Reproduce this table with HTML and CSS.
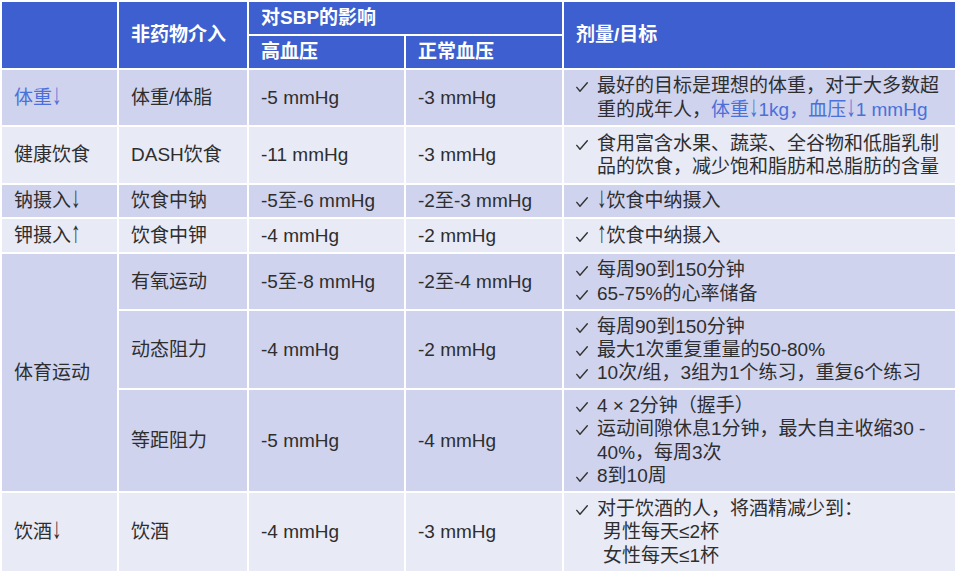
FILE: index.html
```html
<!DOCTYPE html>
<html lang="zh-CN">
<head>
<meta charset="utf-8">
<title>非药物介入</title>
<link rel="stylesheet" href="styles.css">
</head>
<body>
<table class="tbl">
  <colgroup>
    <col class="c1"><col class="c2"><col class="c3"><col class="c4"><col class="c5">
  </colgroup>
  <thead>
    <tr class="h32">
      <th rowspan="2"></th>
      <th rowspan="2">非药物介入</th>
      <th colspan="2">对SBP的影响</th>
      <th rowspan="2">剂量/目标</th>
    </tr>
    <tr class="h32">
      <th>高血压</th>
      <th>正常血压</th>
    </tr>
  </thead>
  <tbody>
    <tr class="dark h55">
      <td class="blue">体重<span class="arr">↓</span></td>
      <td>体重/体脂</td>
      <td>-5 mmHg</td>
      <td>-3 mmHg</td>
      <td><div class="item"><span class="ck"><svg viewBox="0 0 12 10" width="12" height="10"><path d="M0.8 5.4 L4 9.2 L11.3 0.8"/></svg></span><span>最好的目标是理想的体重，对于大多数超<br>重的成年人，<span class="blue">体重<span class="arr">↓</span>1kg，血压<span class="arr">↓</span>1 mmHg</span></span></div></td>
    </tr>
    <tr class="light h56">
      <td>健康饮食</td>
      <td>DASH饮食</td>
      <td>-11 mmHg</td>
      <td>-3 mmHg</td>
      <td><div class="item"><span class="ck"><svg viewBox="0 0 12 10" width="12" height="10"><path d="M0.8 5.4 L4 9.2 L11.3 0.8"/></svg></span><span>食用富含水果、蔬菜、全谷物和低脂乳制<br>品的饮食，减少饱和脂肪和总脂肪的含量</span></div></td>
    </tr>
    <tr class="dark h32">
      <td>钠摄入<span class="arr">↓</span></td>
      <td>饮食中钠</td>
      <td>-5至-6 mmHg</td>
      <td>-2至-3 mmHg</td>
      <td><div class="item"><span class="ck"><svg viewBox="0 0 12 10" width="12" height="10"><path d="M0.8 5.4 L4 9.2 L11.3 0.8"/></svg></span><span><span class="arr">↓</span>饮食中纳摄入</span></div></td>
    </tr>
    <tr class="light h33">
      <td>钾摄入<span class="arr">↑</span></td>
      <td>饮食中钾</td>
      <td>-4 mmHg</td>
      <td>-2 mmHg</td>
      <td><div class="item"><span class="ck"><svg viewBox="0 0 12 10" width="12" height="10"><path d="M0.8 5.4 L4 9.2 L11.3 0.8"/></svg></span><span><span class="arr">↑</span>饮食中纳摄入</span></div></td>
    </tr>
    <tr class="dark h55">
      <td rowspan="3">体育运动</td>
      <td>有氧运动</td>
      <td>-5至-8 mmHg</td>
      <td>-2至-4 mmHg</td>
      <td>
        <div class="item"><span class="ck"><svg viewBox="0 0 12 10" width="12" height="10"><path d="M0.8 5.4 L4 9.2 L11.3 0.8"/></svg></span><span>每周90到150分钟</span></div>
        <div class="item"><span class="ck"><svg viewBox="0 0 12 10" width="12" height="10"><path d="M0.8 5.4 L4 9.2 L11.3 0.8"/></svg></span><span>65-75%的心率储备</span></div>
      </td>
    </tr>
    <tr class="dark h77">
      <td>动态阻力</td>
      <td>-4 mmHg</td>
      <td>-2 mmHg</td>
      <td>
        <div class="item"><span class="ck"><svg viewBox="0 0 12 10" width="12" height="10"><path d="M0.8 5.4 L4 9.2 L11.3 0.8"/></svg></span><span>每周90到150分钟</span></div>
        <div class="item"><span class="ck"><svg viewBox="0 0 12 10" width="12" height="10"><path d="M0.8 5.4 L4 9.2 L11.3 0.8"/></svg></span><span>最大1次重复重量的50-80%</span></div>
        <div class="item"><span class="ck"><svg viewBox="0 0 12 10" width="12" height="10"><path d="M0.8 5.4 L4 9.2 L11.3 0.8"/></svg></span><span>10次/组，3组为1个练习，重复6个练习</span></div>
      </td>
    </tr>
    <tr class="dark h101">
      <td>等距阻力</td>
      <td>-5 mmHg</td>
      <td>-4 mmHg</td>
      <td>
        <div class="item"><span class="ck"><svg viewBox="0 0 12 10" width="12" height="10"><path d="M0.8 5.4 L4 9.2 L11.3 0.8"/></svg></span><span>4 × 2分钟（握手）</span></div>
        <div class="item"><span class="ck"><svg viewBox="0 0 12 10" width="12" height="10"><path d="M0.8 5.4 L4 9.2 L11.3 0.8"/></svg></span><span>运动间隙休息1分钟，最大自主收缩30 -<br>40%，每周3次</span></div>
        <div class="item"><span class="ck"><svg viewBox="0 0 12 10" width="12" height="10"><path d="M0.8 5.4 L4 9.2 L11.3 0.8"/></svg></span><span>8到10周</span></div>
      </td>
    </tr>
    <tr class="light h78">
      <td>饮酒<span class="arr">↓</span></td>
      <td>饮酒</td>
      <td>-4 mmHg</td>
      <td>-3 mmHg</td>
      <td>
        <div class="item"><span class="ck"><svg viewBox="0 0 12 10" width="12" height="10"><path d="M0.8 5.4 L4 9.2 L11.3 0.8"/></svg></span><span>对于饮酒的人，将酒精减少到：</span></div>
        <div class="sub">男性每天≤2杯</div>
        <div class="sub">女性每天≤1杯</div>
      </td>
    </tr>
  </tbody>
</table>
</body>
</html>
```

FILE: styles.css
```css
html, body {
  margin: 0;
  padding: 0;
  background: #ffffff;
}

.tbl {
  width: 957px;
  border-collapse: separate;
  border-spacing: 2px;
  background: #ffffff;
  table-layout: fixed;
  font-family: "Liberation Sans", "Noto Sans CJK SC", sans-serif;
  font-size: 19px;
  line-height: 23.3px;
  color: #2e2e2e;
}

.c1 { width: 115px; }
.c2 { width: 128px; }
.c3 { width: 155px; }
.c4 { width: 156px; }
.c5 { width: 391px; }

.h32 { height: 32px; }
.h33 { height: 33px; }
.h55 { height: 55px; }
.h56 { height: 56px; }
.h77 { height: 77px; }
.h78 { height: 78px; }
.h101 { height: 101px; }

.tbl th,
.tbl td {
  padding: 3px 0 3px 12px;
  text-align: left;
  vertical-align: middle;
  white-space: nowrap;
}

.tbl th {
  background: #3e5fcf;
  color: #ffffff;
  font-weight: bold;
}

.dark td { background: #cfd3ee; }
.light td { background: #e8eaf6; }

.blue { color: #4b70d8; }

.arr {
  display: inline-block;
  transform: scaleY(1.55);
  transform-origin: 50% 80%;
}

.item {
  display: flex;
  align-items: flex-start;
}

.ck {
  flex: 0 0 21px;
  width: 21px;
  height: 23.3px;
  display: flex;
  align-items: flex-start;
  padding-top: 8px;
  box-sizing: border-box;
}

.ck svg {
  display: block;
  fill: none;
  stroke: #333333;
  stroke-width: 1.4;
  stroke-linecap: round;
  stroke-linejoin: round;
}

.sub {
  padding-left: 27px;
}
```
